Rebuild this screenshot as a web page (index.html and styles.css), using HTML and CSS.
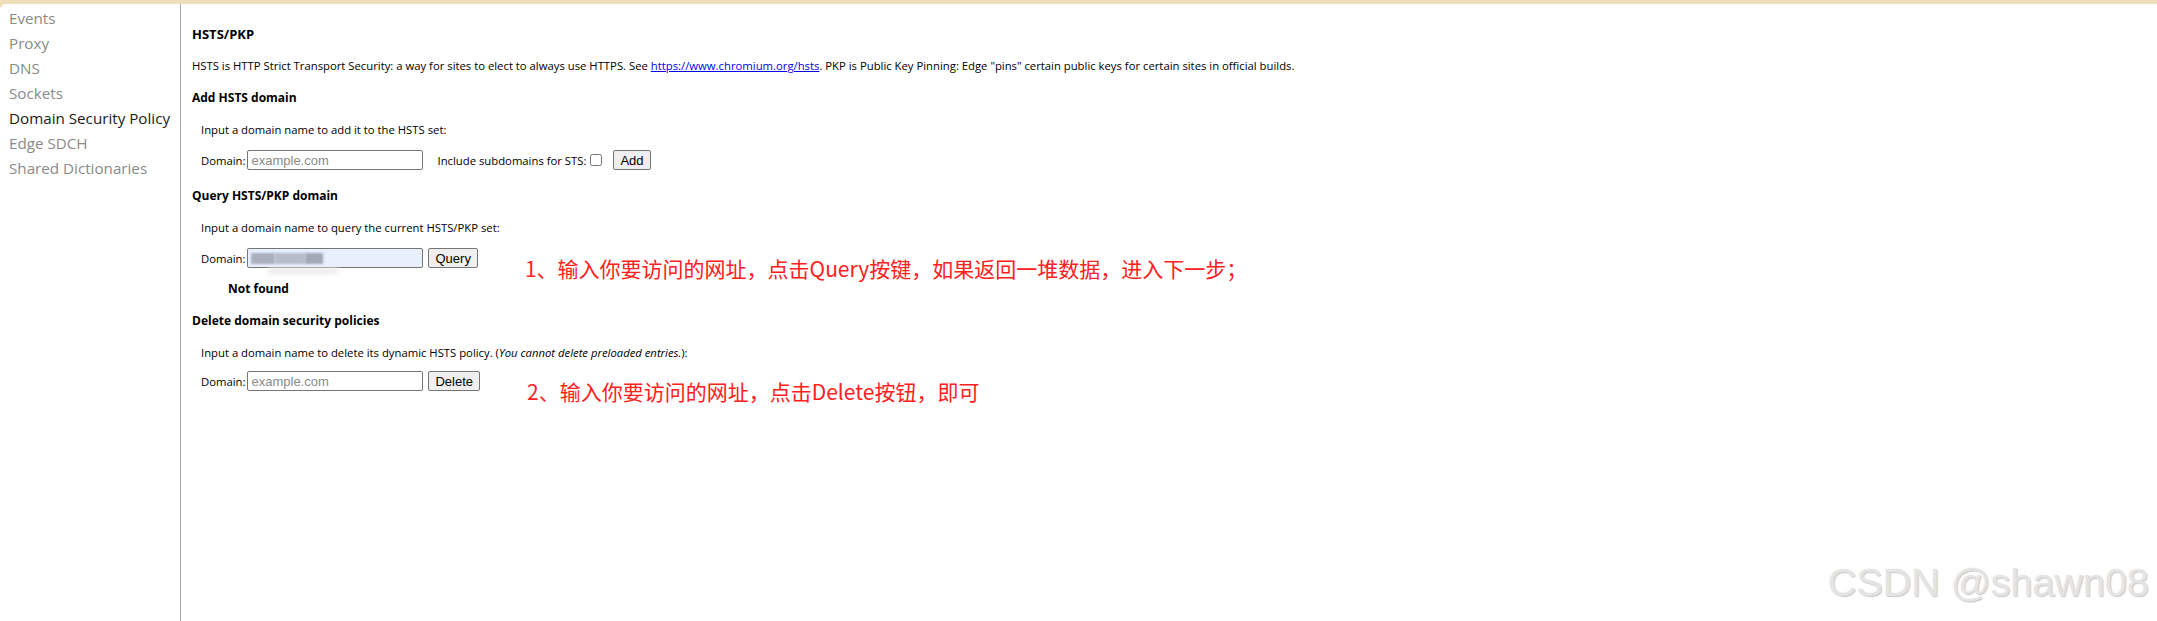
FILE: index.html
```html
<!DOCTYPE html>
<html lang="zh-CN">
<head>
    <meta charset="UTF-8">
    <meta name="viewport" content="width=device-width, initial-scale=1.0">
    <title>net-internals</title>
    <link rel="stylesheet" href="styles.css">
</head>
<body>
    <div class="top-bar"></div>
    <div class="page">
        <ul class="sidebar">
            <li>Events</li>
            <li>Proxy</li>
            <li>DNS</li>
            <li>Sockets</li>
            <li class="selected">Domain Security Policy</li>
            <li>Edge SDCH</li>
            <li>Shared Dictionaries</li>
        </ul>
        <div class="main">
            <h4 class="title">HSTS/PKP</h4>
            <p class="desc">HSTS is HTTP Strict Transport Security: a way for sites to elect to always use HTTPS. See <a href="#">https://www.chromium.org/hsts</a>. PKP is Public Key Pinning: Edge "pins" certain public keys for certain sites in official builds.</p>

            <h4 class="sub">Add HSTS domain</h4>
            <div class="section">
                <p class="hint">Input a domain name to add it to the HSTS set:</p>
                <div class="row">
                    <label>Domain:</label>
                    <input class="field" type="text" placeholder="example.com">
                    <label class="sts">Include subdomains for STS:</label>
                    <input class="check" type="checkbox">
                    <button class="btn">Add</button>
                </div>
            </div>

            <h4 class="sub">Query HSTS/PKP domain</h4>
            <div class="section">
                <p class="hint">Input a domain name to query the current HSTS/PKP set:</p>
                <div class="row">
                    <label>Domain:</label>
                    <span class="field filled">
                        <span class="blur b1"></span>
                        <span class="blur b2"></span>
                        <span class="blur b3"></span>
                        <span class="smudge"></span>
                    </span>
                    <button class="btn">Query</button>
                    <span class="note note-query">1、输入你要访问的网址，点击Query按键，如果返回一堆数据，进入下一步；</span>
                </div>
                <div class="result">Not found</div>
            </div>

            <h4 class="sub">Delete domain security policies</h4>
            <div class="section">
                <p class="hint">Input a domain name to delete its dynamic HSTS policy. (<i>You cannot delete preloaded entries.</i>):</p>
                <div class="row row-delete">
                    <label>Domain:</label>
                    <input class="field" type="text" placeholder="example.com">
                    <button class="btn">Delete</button>
                    <span class="note note-delete">2、输入你要访问的网址，点击Delete按钮，即可</span>
                </div>
            </div>
        </div>
    </div>
    <div class="watermark">CSDN @shawn08</div>
</body>
</html>
```

FILE: styles.css
```css
body {
    margin: 0;
    background: #eedfb8;
    font-family: 'Open Sans', 'Noto Sans', sans-serif;
    color: #000;
    height: 621px;
    overflow: hidden;
}
.top-bar {
    height: 4px;
}
.page {
    display: flex;
    background: white;
    height: 617px;
    border-top-left-radius: 6px;
}
.sidebar {
    list-style: none;
    margin: 0;
    padding: 2px 0 0 9px;
    width: 171px;
    border-right: 1px solid #a8a8a8;
    font-size: 15.2px;
}
.sidebar li {
    height: 25px;
    line-height: 25px;
    color: #8a8a8a;
    white-space: nowrap;
}
.sidebar li.selected {
    color: #1a1a1a;
}
.main {
    flex: 1;
    padding: 20px 0 0 11px;
    font-size: 11.3px;
}
.title, .sub {
    margin: 0;
    font-size: 12px;
    font-weight: bold;
    line-height: 20px;
}
.title {
    font-size: 13px;
}
.desc {
    margin: 12px 0 12px;
    line-height: 20px;
}
.desc a {
    color: #0000ee;
}
.section {
    padding: 12px 0 0 9px;
    margin-bottom: 16px;
}
.hint {
    margin: 0;
    line-height: 20px;
}
.row {
    display: flex;
    align-items: center;
    margin-top: 10px;
    height: 20px;
}
.row-delete {
    margin-top: 8px;
}
.row label {
    margin-right: 2px;
}
.field {
    width: 176px;
    height: 20px;
    box-sizing: border-box;
    border: 1px solid #767676;
    border-radius: 2px;
    padding: 0 3px;
    font-family: 'Liberation Sans', Arial, sans-serif;
    font-size: 13px;
    margin: 0;
}
.field::placeholder {
    color: #8a8a8a;
}
.filled {
    display: block;
    position: relative;
    background: #e8f0fe;
}
.blur {
    position: absolute;
    top: 4px;
    height: 11px;
    background: #a9afbb;
    filter: blur(1.2px);
}
.b1 { left: 3px; width: 24px; }
.b2 { left: 27px; width: 30px; background: #b6bcc8; }
.b3 { left: 57px; width: 18px; background: #a3a9b6; }
.smudge {
    position: absolute;
    left: 20px;
    top: 19px;
    width: 70px;
    height: 6px;
    background: #ececf0;
    filter: blur(2px);
}
.sts {
    margin-left: 14px;
}
.check {
    margin: 0 6px 0 2px;
    width: 12px;
    height: 12px;
}
.btn {
    height: 20px;
    margin-left: 5px;
    padding: 0 6px;
    border: 1px solid #767676;
    border-radius: 2px;
    background: #efefef;
    font-family: 'Liberation Sans', Arial, sans-serif;
    font-size: 13px;
    color: #000;
}
.note {
    margin-left: 47px;
    color: #ff2020;
    font-family: 'Noto Sans CJK SC', sans-serif;
    font-size: 21px;
    white-space: nowrap;
    position: relative;
    top: 10px;
}
.note-delete {
    top: 10px;
}
.result {
    margin: 11px 0 -4px 27px;
    font-weight: bold;
    font-size: 12px;
    line-height: 20px;
}
.watermark {
    position: absolute;
    right: 8px;
    bottom: 16px;
    font-family: 'Liberation Sans', Arial, sans-serif;
    font-size: 39.5px;
    color: #e4e4e4;
    text-shadow: 1px 1px 1px #c8c8c8, -1px -1px 0 #fafafa;
}
```
